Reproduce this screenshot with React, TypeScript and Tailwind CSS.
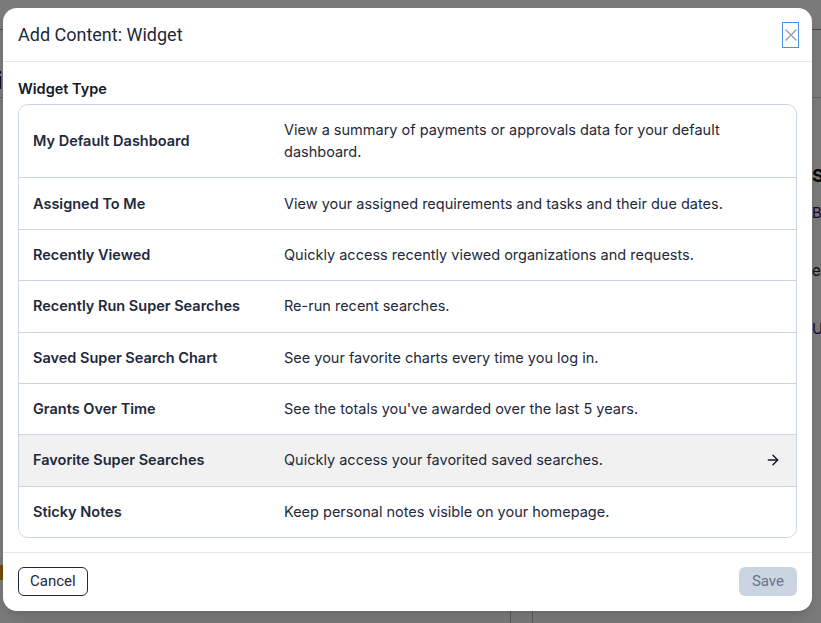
import React from "react";
import { ArrowRight } from "lucide-react";

type WidgetType = {
  name: string;
  description: string;
};

const widgetTypes: WidgetType[] = [
  {
    name: "My Default Dashboard",
    description:
      "View a summary of payments or approvals data for your default dashboard.",
  },
  {
    name: "Assigned To Me",
    description: "View your assigned requirements and tasks and their due dates.",
  },
  {
    name: "Recently Viewed",
    description: "Quickly access recently viewed organizations and requests.",
  },
  { name: "Recently Run Super Searches", description: "Re-run recent searches." },
  {
    name: "Saved Super Search Chart",
    description: "See your favorite charts every time you log in.",
  },
  {
    name: "Grants Over Time",
    description: "See the totals you've awarded over the last 5 years.",
  },
  {
    name: "Favorite Super Searches",
    description: "Quickly access your favorited saved searches.",
  },
  {
    name: "Sticky Notes",
    description: "Keep personal notes visible on your homepage.",
  },
];

const HOVERED = "Favorite Super Searches";

function BackgroundPage() {
  return (
    <div className="flex h-[623px] w-[821px] flex-col overflow-hidden bg-white font-['Inter',sans-serif]">
      <div className="h-[30px] shrink-0 border-b border-[#9a9a9a]" />
      <div className="flex h-[68px] shrink-0 items-end border-b border-[#d0d0d0] pb-[1px]">
        <h1 className="-ml-[22px] text-[24px] font-bold leading-[30px] text-[#111]">
          Hi
        </h1>
      </div>
      <div className="flex flex-1 overflow-hidden">
        <div className="flex w-[511px] shrink-0 flex-col justify-end border-r border-[#bbb] pb-[43px]">
          <div className="h-[15px] w-[10px] bg-[#f19e16]" />
        </div>
        <div className="ml-[21px] flex shrink-0 border-l border-[#bbb] pl-[279px]">
          <div className="flex flex-col whitespace-nowrap pt-[68px] text-[15px] leading-[20px]">
            <span className="text-[18px] font-bold text-[#111]">Summary</span>
            <span className="mt-[17px] text-[#3b0a6b]">Budget</span>
            <span className="mt-[38px] text-[#222]">edit</span>
            <span className="mt-[38px] text-[#3b0a6b]">Users</span>
          </div>
        </div>
      </div>
    </div>
  );
}

function CloseIcon() {
  return (
    <svg width="12" height="12" viewBox="0 0 12 12" className="shrink-0" aria-hidden="true">
      <path d="M1 1 L11 11 M11 1 L1 11" stroke="#9ca3af" strokeWidth="1.5" strokeLinecap="round" fill="none" />
    </svg>
  );
}

export default function App() {
  return (
    <div className="relative h-[623px] w-[821px] overflow-hidden">
      <BackgroundPage />
      <div className="absolute inset-0 bg-black/[0.52]">
        <div className="ml-[3px] mt-[8px] flex h-[603px] w-[809px] flex-col rounded-[14px] bg-white shadow-lg">
          <div className="flex h-[54px] shrink-0 items-center justify-between border-b border-[#e2e8f0] pl-[15px] pr-[13px]">
            <h2 className="font-['Roboto',sans-serif] text-[18px] leading-[22px] text-[#1f2937]">
              Add Content: Widget
            </h2>
            <button className="flex h-[26px] w-[17px] items-center justify-center border border-[#4a90e2]">
              <CloseIcon />
            </button>
          </div>

          <div className="flex flex-1 flex-col px-[15px] pb-[13px] pt-[17px] font-['Inter',sans-serif]">
            <div className="mb-[5px] text-[14.5px] font-semibold leading-[20px] text-[#111827]">
              Widget Type
            </div>
            <div className="overflow-hidden rounded-[10px] border border-[#cbd5e1]">
              {widgetTypes.map((w, i) => (
                <div
                  key={w.name}
                  className={
                    "flex items-center py-[14.2px] pl-[14px] pr-[14px] text-[14.5px] leading-[22px] text-[#1e293b] " +
                    (i > 0 ? "border-t border-[#cbd5e1] " : "") +
                    (w.name === HOVERED ? "bg-[#f1f1f1]" : "bg-white")
                  }
                >
                  <div className="w-[251px] shrink-0 font-semibold">{w.name}</div>
                  <div className="flex-1 pr-[20px]">{w.description}</div>
                  {w.name === HOVERED && (
                    <ArrowRight size={16} strokeWidth={2.2} className="mr-[1px] shrink-0 text-[#111827]" />
                  )}
                </div>
              ))}
            </div>
          </div>

          <div className="flex h-[59px] shrink-0 items-start justify-between border-t border-[#e2e8f0] px-[15px] pt-[14px] font-['Roboto',sans-serif]">
            <button className="h-[29px] rounded-[6px] border border-[#1f2937] px-[11px] text-[15px] text-[#1f2937]">
              Cancel
            </button>
            <button className="h-[29px] rounded-[6px] bg-[#cbd5e1] px-[13px] text-[15px] text-[#64748b]">
              Save
            </button>
          </div>
        </div>
      </div>
    </div>
  );
}
